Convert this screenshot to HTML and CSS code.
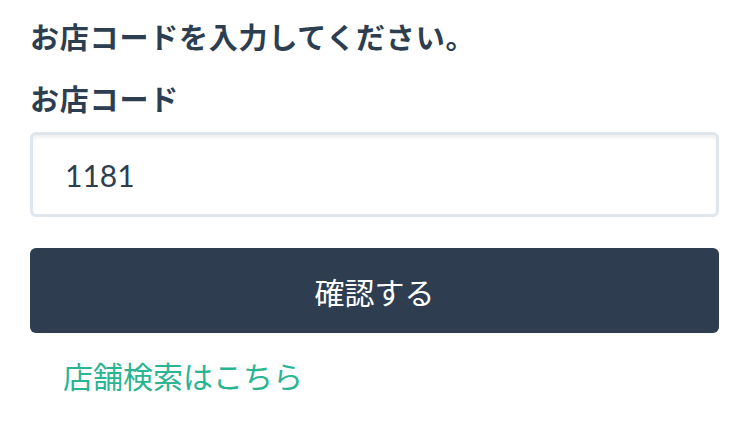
FILE: index.html
```html
<!DOCTYPE html>
<html lang="ja">
<head>
<meta charset="utf-8">
<title>お店コード</title>
<link rel="stylesheet" href="styles.css">
</head>
<body>
<main class="form">
  <h1 class="title">お店コードを入力してください。</h1>
  <label class="label" for="code">お店コード</label>
  <input class="input" id="code" type="text" value="1181">
  <button class="button" type="button">確認する</button>
  <a class="link" href="#">店舗検索はこちら</a>
</main>
</body>
</html>
```

FILE: styles.css
```css
html, body {
  margin: 0;
  padding: 0;
  background: #ffffff;
}

body {
  font-family: Lato, "Noto Sans CJK JP", sans-serif;
  color: #2d3e50;
}

.form {
  display: flex;
  flex-direction: column;
  padding: 17px 19px 0 30px;
}

.title {
  margin: 0;
  font-size: 29px;
  letter-spacing: 0.8px;
  line-height: 42px;
  font-weight: 700;
  color: #2d3e50;
}

.label {
  margin-top: 20px;
  font-size: 29px;
  letter-spacing: 0.8px;
  line-height: 42px;
  font-weight: 700;
  color: #2d3e50;
}

.input {
  margin-top: 11px;
  box-sizing: border-box;
  height: 85px;
  width: 100%;
  border: 3px solid #dfe6ec;
  border-radius: 6px;
  box-shadow: inset 0 3px 3px rgba(0, 0, 0, 0.06);
  padding: 0 32px;
  font-family: Lato, "Noto Sans CJK JP", sans-serif;
  font-size: 30px;
  color: #2d3e50;
  background: #ffffff;
  outline: none;
}

.button {
  margin-top: 31px;
  height: 85px;
  width: 100%;
  border: 0;
  border-radius: 6px;
  background: #2e3e50;
  color: #ffffff;
  font-family: "Noto Sans CJK JP", sans-serif;
  font-size: 30px;
  font-weight: 400;
  cursor: pointer;
}

.link {
  margin-top: 21px;
  padding-left: 33px;
  font-family: "Noto Sans CJK JP", sans-serif;
  font-size: 30px;
  line-height: 42px;
  color: #2ab592;
  text-decoration: none;
}
```
